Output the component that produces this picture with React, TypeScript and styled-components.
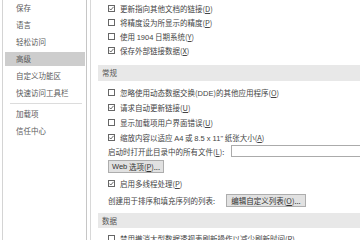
import React from "react";
import styled, { createGlobalStyle } from "styled-components";

const Global = createGlobalStyle`
  html, body { margin: 0; padding: 0; background: #ffffff; overflow: hidden; }
  body { font-family: "Noto Sans CJK SC", "Noto Sans", sans-serif; }
`;

const Window = styled.div`
  display: flex;
  width: 360px;
  height: 240px;
  overflow: hidden;
  padding-left: 2px;
  box-sizing: border-box;
  background: #fff;
`;

const Nav = styled.nav`
  width: 85px;
  flex: none;
  box-sizing: border-box;
  border-left: 1px solid #d4d4d4;
  border-right: 1px solid #c6c6c6;
  padding: 1px 1px 0 2px;
  display: flex;
  flex-direction: column;
  gap: 3px;
`;

const NavItem = styled.div<{ $active?: boolean }>`
  height: 14px;
  line-height: 14px;
  padding-left: 11px;
  font-size: 7.5px;
  color: #5a5a5a;
  white-space: nowrap;
  background: ${(p) => (p.$active ? "#cdcdcd" : "transparent")};
`;

const NavSep = styled.div`
  height: 1px;
  margin: 0 3px 0 5px;
  background: #dcdcdc;
`;

const Content = styled.div`
  flex: 1;
  margin-left: 3px;
  border-left: 1px solid #d8d8d8;
  padding-left: 7px;
  padding-top: 1px;
  display: flex;
  flex-direction: column;
  overflow: hidden;
  min-width: 0;
`;

const Group = styled.div<{ $top?: number }>`
  display: flex;
  flex-direction: column;
  margin-top: ${(p) => p.$top ?? 0}px;
`;

const Band = styled.div<{ $h?: number; $top?: number }>`
  height: ${(p) => p.$h ?? 16}px;
  line-height: ${(p) => p.$h ?? 16}px;
  margin-top: ${(p) => p.$top ?? 0}px;
  padding-left: 4px;
  background: #e8e8e8;
  font-size: 7.5px;
  color: #555;
  flex: none;
`;

const Row = styled.div<{ $h?: number; $top?: number }>`
  display: flex;
  align-items: center;
  height: ${(p) => p.$h ?? 14}px;
  margin-top: ${(p) => p.$top ?? 0}px;
  padding-left: 10px;
  font-size: 7.5px;
  color: #444;
  white-space: nowrap;
  flex: none;
`;

const Box = styled.span`
  width: 7px;
  height: 7px;
  box-sizing: border-box;
  border: 1px solid #666;
  background: #fff;
  margin-right: 5px;
  flex: none;
  display: flex;
  align-items: center;
  justify-content: center;
`;

const Label = styled.span<{ $w?: number }>`
  ${(p) => (p.$w ? `width: ${p.$w}px; flex: none;` : "")}
`;

const Latin = styled.span`
  font-family: "Liberation Sans", "Noto Sans", sans-serif;
`;

const TextInput = styled.div`
  width: 160px;
  height: 12px;
  box-sizing: border-box;
  border: 1px solid #ababab;
  background: #fff;
  flex: none;
`;

const Button = styled.div<{ $w: number }>`
  width: ${(p) => p.$w}px;
  height: 13px;
  box-sizing: border-box;
  border: 1px solid #adadad;
  background: #e1e1e1;
  display: flex;
  align-items: center;
  justify-content: center;
  font-size: 7.5px;
  color: #333;
  flex: none;
`;

const Check = ({ on }: { on?: boolean }) => (
  <Box>
    {on && (
      <svg width="5" height="5" viewBox="0 0 5 5">
        <polyline points="0.4,2.6 1.8,4 4.6,0.8" fill="none" stroke="#444" strokeWidth="0.8" />
      </svg>
    )}
  </Box>
);

const Opt = ({ on, children, h, top }: { on?: boolean; children: React.ReactNode; h?: number; top?: number }) => (
  <Row $h={h} $top={top}>
    <Check on={on} />
    <span>{children}</span>
  </Row>
);

export default function App() {
  return (
    <>
      <Global />
      <Window>
        <Nav>
          <NavItem>保存</NavItem>
          <NavItem>语言</NavItem>
          <NavItem>轻松访问</NavItem>
          <NavItem $active>高级</NavItem>
          <NavItem>自定义功能区</NavItem>
          <NavItem>快速访问工具栏</NavItem>
          <NavSep />
          <NavItem>加载项</NavItem>
          <NavItem>信任中心</NavItem>
        </Nav>
        <Content>
          <Group>
            <Opt on>更新指向其他文档的链接(<u>D</u>)</Opt>
            <Opt>将精度设为所显示的精度(<u>P</u>)</Opt>
            <Opt>使用 <Latin>1904</Latin> 日期系统(<u>Y</u>)</Opt>
            <Opt on>保存外部链接数据(<u>X</u>)</Opt>
          </Group>
          <Band $top={8}>常规</Band>
          <Group $top={4}>
            <Opt h={15}>忽略使用动态数据交换(<Latin>DDE</Latin>)的其他应用程序(<u>O</u>)</Opt>
            <Opt h={15} on>请求自动更新链接(<u>U</u>)</Opt>
            <Opt h={15}>显示加载项用户界面错误(<u>U</u>)</Opt>
            <Opt h={15} on>缩放内容以适应 <Latin>A4</Latin> 或 <Latin>8.5 x 11"</Latin> 纸张大小(<u>A</u>)</Opt>
          </Group>
          <Row $h={12} $top={0}>
            <Label $w={123}>启动时打开此目录中的所有文件(<u>L</u>):</Label>
            <TextInput />
          </Row>
          <Row $h={13} $top={3}>
            <Button $w={56}><Latin>Web</Latin>&nbsp;选项(<u>P</u>)...</Button>
          </Row>
          <Opt on top={3}>启用多线程处理(<u>P</u>)</Opt>
          <Row $h={14} $top={3}>
            <Label $w={118}>创建用于排序和填充序列的列表:</Label>
            <Button $w={80}>编辑自定义列表(<u>O</u>)...</Button>
          </Row>
          <Band $h={15} $top={6}>数据</Band>
          <Opt top={3}>禁用撤消大型数据透视表刷新操作以减少刷新时间(<u>R</u>)</Opt>
        </Content>
      </Window>
    </>
  );
}
